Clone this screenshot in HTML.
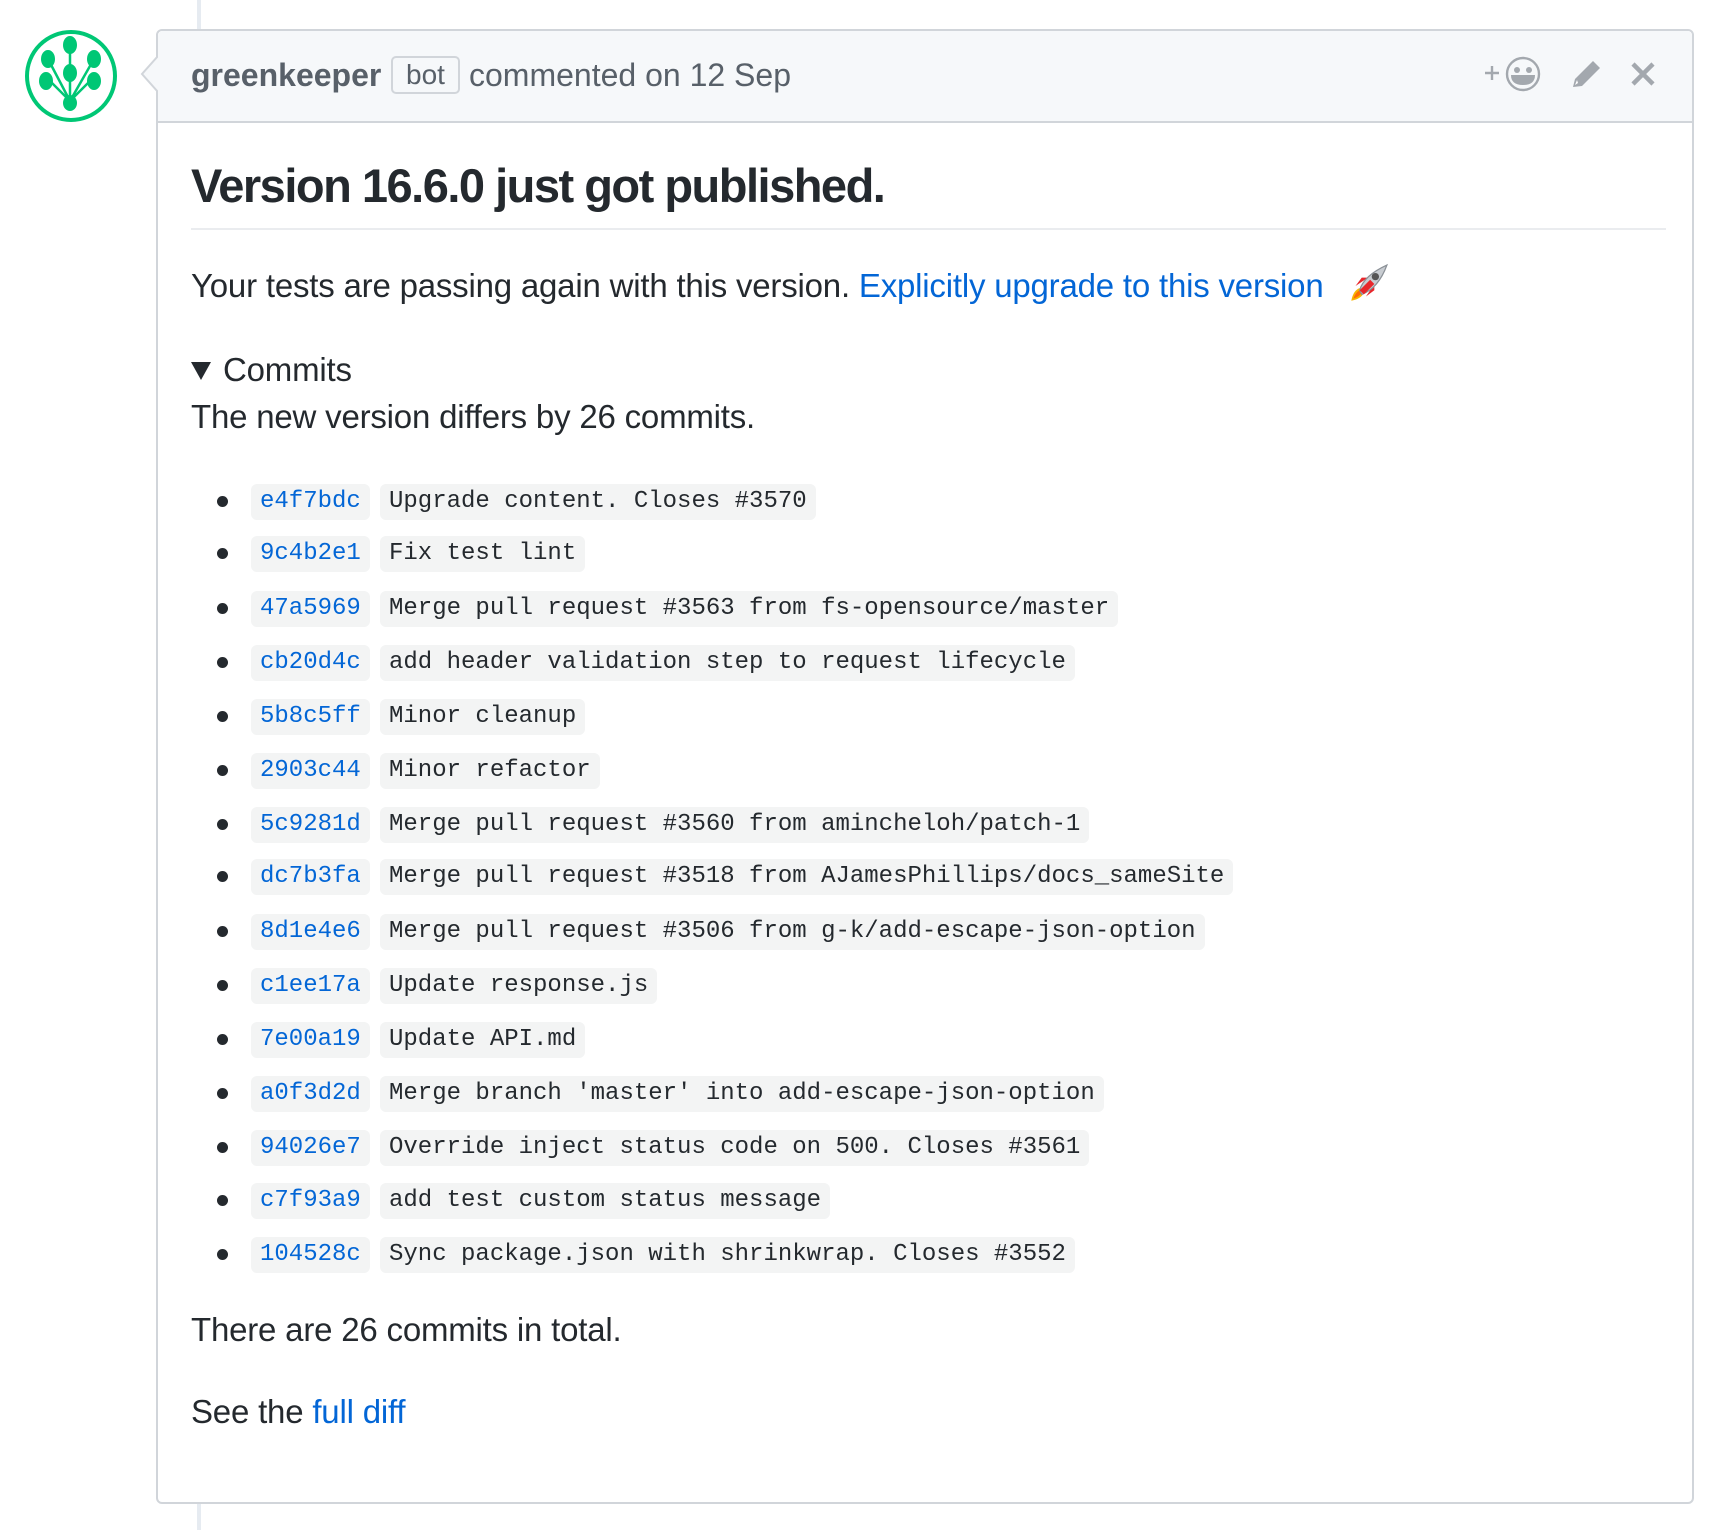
<!DOCTYPE html>
<html><head><meta charset="utf-8"><style>
*{margin:0;padding:0;box-sizing:border-box}
html,body{width:1724px;height:1530px;background:#fff;overflow:hidden;font-family:"Liberation Sans",sans-serif;color:#24292e}
.a{position:absolute;white-space:nowrap}
.line{position:absolute;left:197px;width:4px;background:#e6ebf1}
.box{position:absolute;left:156px;top:29px;width:1538px;height:1475px;border:2px solid #d1d5da;border-radius:6px}
.hdr{position:absolute;left:0;top:0;right:0;height:92px;background:#f6f8fa;border-bottom:2px solid #d1d5da;border-radius:5px 5px 0 0}
.txt{font-size:33px;letter-spacing:-0.2px}
.sha,.msg{position:absolute;height:36px;line-height:36px;background:#f3f4f4;border-radius:6px;font-family:"Liberation Mono",monospace;font-size:24px;padding:0 9px;white-space:nowrap}
.sha{left:251px;color:#0366d6}
.msg{left:380px;color:#24292e}
.dot{position:absolute;left:217px;width:11px;height:11px;border-radius:50%;background:#24292e}
a{color:#0366d6;text-decoration:none}
</style></head><body>
<div class="line" style="top:0;height:30px"></div>
<div class="line" style="top:1503px;height:27px"></div>

<svg class="a" style="left:24px;top:29px" width="94" height="94" viewBox="0 0 94 94">
<circle cx="47" cy="47" r="44" fill="#fff" stroke="#00c775" stroke-width="4"/>
<g stroke="#00c775" stroke-width="2.5" fill="none">
<path d="M46 72 L46 14 M46 72 L24 30 M46 72 L70 30 M46 72 L26 52 L22 50 M46 72 L66 52 L70 50 M46 72 L46 44"/>
</g>
<g fill="#00c775">
<ellipse cx="46" cy="16" rx="7" ry="9"/><ellipse cx="24" cy="30" rx="7" ry="9"/><ellipse cx="70" cy="30" rx="7" ry="9"/>
<ellipse cx="46" cy="44" rx="7" ry="9"/><ellipse cx="22" cy="52" rx="7" ry="9"/><ellipse cx="70" cy="52" rx="7" ry="9"/>
<ellipse cx="46" cy="74" rx="7" ry="8"/>
</g>
</svg>

<div class="box">
<div class="hdr"></div>
</div>
<svg class="a" style="left:140px;top:56px" width="20" height="36" viewBox="0 0 20 36"><path d="M18 0 L2 18 L18 36" fill="#f6f8fa" stroke="#d1d5da" stroke-width="2"/><rect x="18" y="0" width="3" height="36" fill="#f6f8fa"/></svg>

<div class="a" style="left:191px;top:56px;line-height:38px;color:#586069;font-size:32px"><b>greenkeeper</b></div>
<div class="a" style="left:391px;top:56px;width:69px;height:38px;border:2px solid #d1d5da;border-radius:5px;font-size:28px;line-height:34px;text-align:center;color:#586069">bot</div>
<div class="a" style="left:469px;top:56px;line-height:38px;color:#586069;font-size:32px">commented on 12 Sep</div>

<svg class="a" style="left:1477px;top:55px" width="190" height="40" viewBox="0 0 190 40">
<g fill="none" stroke="#a3a8ae" stroke-width="2.4">
<path d="M8 18 h14 M15 11 v14"/>
<circle cx="46" cy="19" r="16"/>
</g>
<circle cx="40" cy="15" r="3" fill="#a3a8ae"/><circle cx="52" cy="15" r="3" fill="#a3a8ae"/>
<path d="M34 20 h24 q0 10 -12 10 q-12 0 -12 -10z" fill="#a3a8ae"/>
<path d="M96 32 l2 -8 l18 -18 l7 7 l-18 18 z" fill="#a3a8ae"/>
<path d="M98 30 l3 -2 l-1 -3 z" fill="#fff"/>
<path d="M156 9 l20 20 M176 9 l-20 20" stroke="#a3a8ae" stroke-width="4.5"/>
</svg>

<div class="a" style="left:191px;top:158px;font-size:47px;font-weight:bold;letter-spacing:-1.5px;line-height:56px">Version 16.6.0 just got published.</div>
<div class="a" style="left:191px;top:228px;width:1475px;height:2px;background:#eaecef"></div>

<div class="a txt" style="left:191px;top:266px;line-height:40px">Your tests are passing again with this version. <a>Explicitly upgrade to this version</a></div>
<svg class="a" style="left:1345px;top:263px" width="44" height="44" viewBox="0 0 42 42">
<path d="M6 36 q2 -10 8 -12 l4 4 q-2 6 -12 8z" fill="#f7b500"/>
<path d="M8 34 q2 -6 6 -8 l2 2 q-2 4 -8 6z" fill="#ff6d00"/>
<path d="M10 22 l6 -8 l6 0 z M20 32 l8 -6 l0 -6 z" fill="#e8262b"/>
<path d="M14 26 q4 -14 26 -24 q-8 22 -24 28z" fill="#c8ccd1" stroke="#8a9096" stroke-width="1.2"/>
<circle cx="29" cy="13" r="3.5" fill="#555"/>
<path d="M14 26 l4 4 l10 -10 l-4 -4z" fill="#e8262b"/>
</svg>

<svg class="a" style="left:191px;top:362px" width="20" height="18" viewBox="0 0 20 18"><path d="M0 0 H20 L10 18z" fill="#24292e"/></svg>
<div class="a txt" style="left:223px;top:351px;line-height:38px">Commits</div>
<div class="a txt" style="left:191px;top:398px;line-height:38px">The new version differs by 26 commits.</div>

<div class="dot" style="top:496px"></div><div class="sha" style="top:484px">e4f7bdc</div><div class="msg" style="top:484px">Upgrade content. Closes #3570</div>
<div class="dot" style="top:548px"></div><div class="sha" style="top:536px">9c4b2e1</div><div class="msg" style="top:536px">Fix test lint</div>
<div class="dot" style="top:603px"></div><div class="sha" style="top:591px">47a5969</div><div class="msg" style="top:591px">Merge pull request #3563 from fs-opensource/master</div>
<div class="dot" style="top:657px"></div><div class="sha" style="top:645px">cb20d4c</div><div class="msg" style="top:645px">add header validation step to request lifecycle</div>
<div class="dot" style="top:711px"></div><div class="sha" style="top:699px">5b8c5ff</div><div class="msg" style="top:699px">Minor cleanup</div>
<div class="dot" style="top:765px"></div><div class="sha" style="top:753px">2903c44</div><div class="msg" style="top:753px">Minor refactor</div>
<div class="dot" style="top:819px"></div><div class="sha" style="top:807px">5c9281d</div><div class="msg" style="top:807px">Merge pull request #3560 from amincheloh/patch-1</div>
<div class="dot" style="top:871px"></div><div class="sha" style="top:859px">dc7b3fa</div><div class="msg" style="top:859px">Merge pull request #3518 from AJamesPhillips/docs_sameSite</div>
<div class="dot" style="top:926px"></div><div class="sha" style="top:914px">8d1e4e6</div><div class="msg" style="top:914px">Merge pull request #3506 from g-k/add-escape-json-option</div>
<div class="dot" style="top:980px"></div><div class="sha" style="top:968px">c1ee17a</div><div class="msg" style="top:968px">Update response.js</div>
<div class="dot" style="top:1034px"></div><div class="sha" style="top:1022px">7e00a19</div><div class="msg" style="top:1022px">Update API.md</div>
<div class="dot" style="top:1088px"></div><div class="sha" style="top:1076px">a0f3d2d</div><div class="msg" style="top:1076px">Merge branch 'master' into add-escape-json-option</div>
<div class="dot" style="top:1142px"></div><div class="sha" style="top:1130px">94026e7</div><div class="msg" style="top:1130px">Override inject status code on 500. Closes #3561</div>
<div class="dot" style="top:1195px"></div><div class="sha" style="top:1183px">c7f93a9</div><div class="msg" style="top:1183px">add test custom status message</div>
<div class="dot" style="top:1249px"></div><div class="sha" style="top:1237px">104528c</div><div class="msg" style="top:1237px">Sync package.json with shrinkwrap. Closes #3552</div>

<div class="a txt" style="left:191px;top:1311px;line-height:38px">There are 26 commits in total.</div>
<div class="a txt" style="left:191px;top:1393px;line-height:38px">See the <a>full diff</a></div>
</body></html>
